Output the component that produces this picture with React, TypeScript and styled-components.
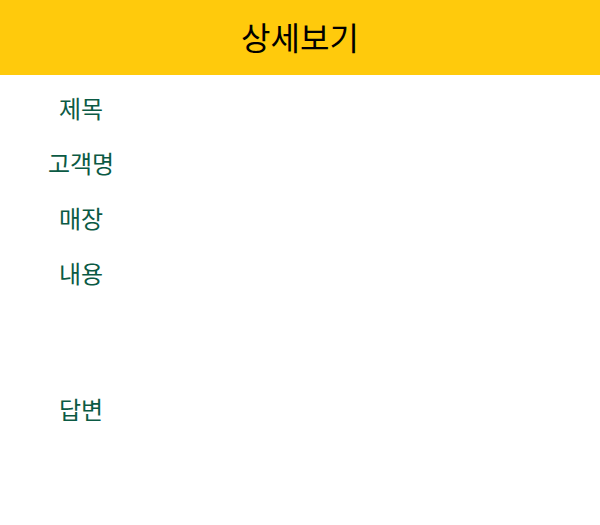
import React from "react";
import styled, { createGlobalStyle } from "styled-components";

const Global = createGlobalStyle`
  body { margin: 0; background: #fff; font-family: "Noto Sans CJK KR", "Noto Sans", sans-serif; }
`;

const Header = styled.header`
  height: 75px;
  background: #ffca0c;
  display: flex;
  align-items: center;
  justify-content: center;
  font-size: 32px;
  font-weight: 400;
  color: #000;
`;

const Title = styled.h1`
  margin: 0;
  font: inherit;
  line-height: 1;
  transform: translateY(-2px);
`;

const Table = styled.div`
  display: grid;
  grid-template-columns: 162px 1fr;
  padding-top: 15px;
`;

const Label = styled.div<{ $h: number }>`
  height: ${(p) => p.$h}px;
  font-size: 24px;
  font-weight: 400;
  color: #0b5a44;
  text-align: center;
  line-height: 36px;
`;

const Value = styled.div<{ $h: number }>`
  height: ${(p) => p.$h}px;
`;

const rows: [string, number][] = [
  ["제목", 55],
  ["고객명", 55],
  ["매장", 55],
  ["내용", 136],
  ["답변", 55],
];

export default function App() {
  return (
    <>
      <Global />
      <Header>
        <Title>상세보기</Title>
      </Header>
      <Table>
        {rows.map(([l, h]) => (
          <React.Fragment key={l}>
            <Label $h={h}>{l}</Label>
            <Value $h={h} />
          </React.Fragment>
        ))}
      </Table>
    </>
  );
}
